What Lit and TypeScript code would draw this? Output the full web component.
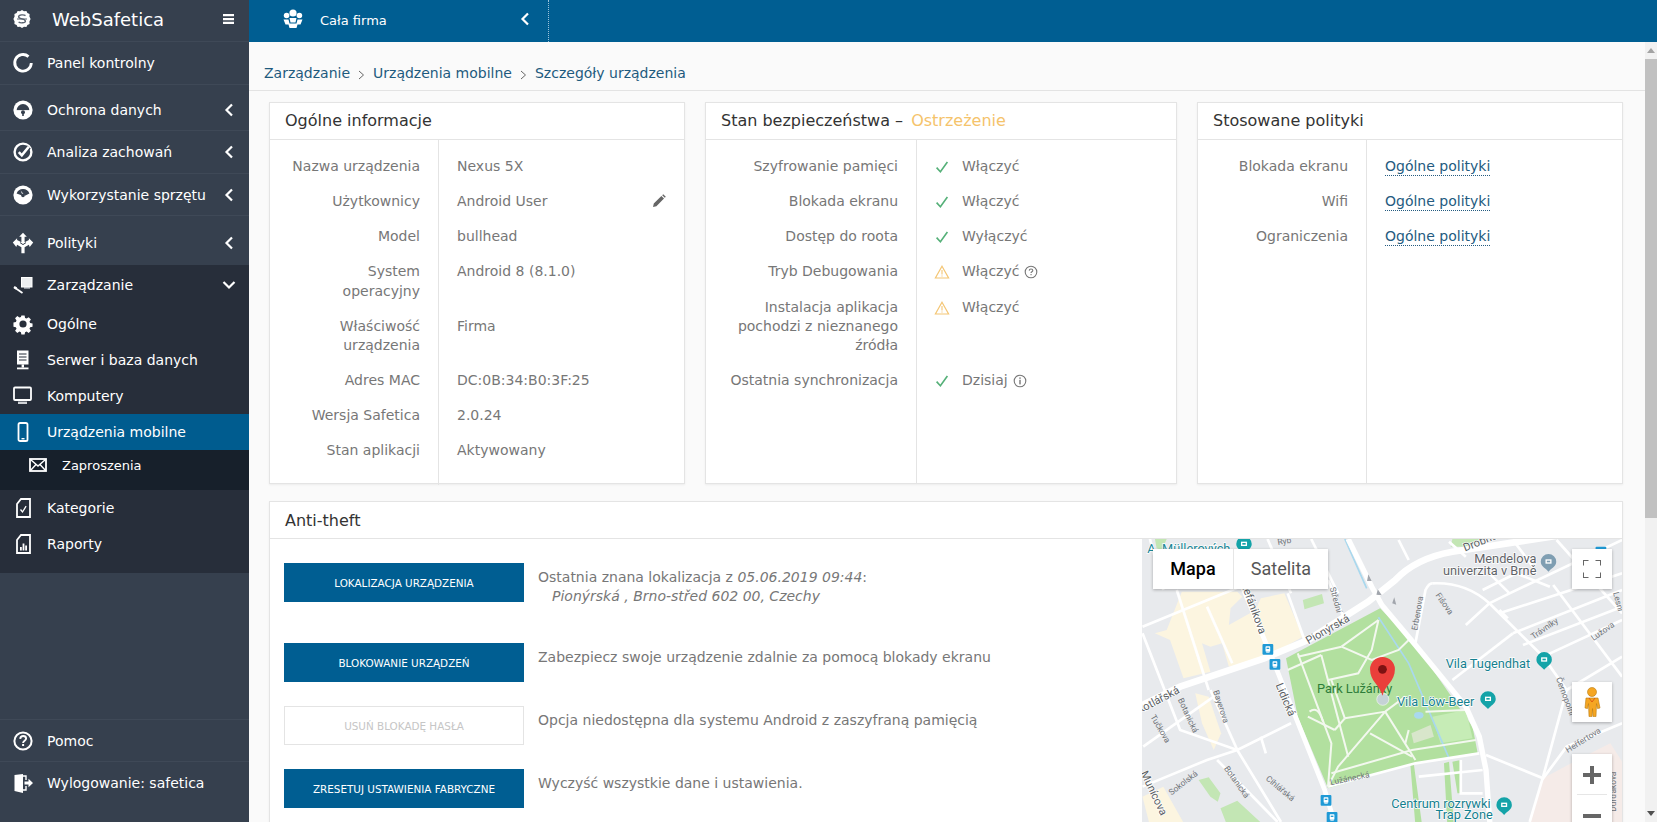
import { LitElement, html, css, svg } from "lit";
import { customElement } from "lit/decorators.js";

const ic = (body: unknown, size = 22) => html`<svg class="ic" width=${size} height=${size} viewBox="0 0 22 22">${body}</svg>`;
const D = "#36404e";
const D2 = "#272e3a";

const icons: Record<string, unknown> = {
  panel: svg`<path d="M16.5 4.6A8.3 8.3 0 1 0 19.3 11" fill="none" stroke="#fff" stroke-width="2.8"/>`,
  shield: svg`<circle cx="11" cy="11" r="9.6" fill="#fff"/><path d="M4.6 11.5a6.4 6.4 0 0 1 12.8 0z" fill="${D}"/><path d="M2 12.6h18v-1.4H2z" fill="#fff"/><circle cx="11" cy="13.2" r="2" fill="${D}"/><rect x="10.2" y="14" width="1.6" height="3" fill="${D}"/>`,
  check: svg`<circle cx="11" cy="11" r="8.4" fill="none" stroke="#fff" stroke-width="2.4"/><path d="M6.8 11.2l3 3.2 7-8.6" fill="none" stroke="${D}" stroke-width="5"/><path d="M6.8 11.2l3 3.2 7-8.6" fill="none" stroke="#fff" stroke-width="2.6"/>`,
  gauge: svg`<circle cx="11" cy="11" r="9.6" fill="#fff"/><path d="M4.6 9.6A6.8 6.8 0 0 1 17.4 9.6L13 11.8 8.6 6.6l2.2 5.2z" fill="${D}"/><circle cx="11" cy="11.4" r="1.8" fill="${D}"/>`,
  policy: svg`<path d="M11 .8l3.8 4h-2.2v5.400l4.300-2.300V6.200l4.300 4.300-3.500 4.500-.8-2.200-4.300 2.500v6H9.400v-6L5.100 12.800l-.8 2.200-3.500-4.500 4.300-4.300v1.700l4.300 2.300V4.800H7.200z" fill="#fff"/><path d="M8 10.600l3 2 3-2" stroke="${D}" stroke-width="1" fill="none"/>`,
  manage: svg`<rect x="9.5" y="3.5" width="10.500" height="9.500" fill="#eceef0" stroke="#fff" stroke-width="1"/><rect x="12" y="13" width="6" height="1.600" fill="#c8ccd2"/><path d="M2.500 13.500l8 5.500" stroke="#fff" stroke-width="1.800"/><path d="M2 13l2.500 1.500" stroke="#fff" stroke-width="2.400"/>`,
  gear: svg`<path d="M9.200 1.600h3.600l.5 2.700 1.700.7 2.300-1.600 2.500 2.500-1.600 2.300.7 1.700 2.700.5v3.600l-2.700.5-.7 1.700 1.600 2.300-2.500 2.500-2.300-1.600-1.700.7-.5 2.700H9.200l-.5-2.700-1.700-.7-2.300 1.600-2.500-2.500 1.600-2.300-.7-1.700-2.700-.5V9.200l2.700-.5.7-1.700-1.600-2.300 2.500-2.500L7 3.800l1.700-.7z" transform="translate(1.100 1.100) scale(.9)" fill="#fff"/><circle cx="11" cy="11" r="3.600" fill="${D2}"/>`,
  server: svg`<path d="M5 1.500h11.500v14H5z" fill="#fff"/><path d="M7 5h7.500M7 8h7.500M7 11h7.500" stroke="${D2}" stroke-width="1.200"/><rect x="9.600" y="15.500" width="2.400" height="3" fill="#fff"/><rect x="5" y="18.500" width="11.500" height="1.800" fill="#fff"/>`,
  monitor: svg`<rect x="2" y="2.500" width="17" height="12.500" rx="1" fill="none" stroke="#fff" stroke-width="1.800"/><rect x="6" y="16.600" width="9" height="2.400" fill="#cfd2d6"/>`,
  phone: svg`<rect x="6.500" y="2" width="9" height="18" rx="1.600" fill="none" stroke="#fff" stroke-width="1.800"/><rect x="9.500" y="17" width="3" height="1.400" fill="#fff"/>`,
  mail: svg`<rect x="3" y="5" width="16" height="12" fill="none" stroke="#fff" stroke-width="1.800"/><path d="M3.500 5.500l7.500 6.500 7.500-6.500M3.500 16.500l5.500-6M18.500 16.500l-5.500-6" fill="none" stroke="#fff" stroke-width="1.400"/>`,
  doccheck: svg`<path d="M9 2h9v18H5V7z" fill="none" stroke="#fff" stroke-width="1.800"/><path d="M8.500 12.500l2 2.500 3.600-5.800" fill="none" stroke="#fff" stroke-width="1.300"/>`,
  docchart: svg`<path d="M9 2h9v18H5V7z" fill="none" stroke="#fff" stroke-width="1.800"/><path d="M8 17.500V14h1.800v3.500zM10.600 17.500v-7h1.800v7zM13.200 17.500v-5H15v5z" fill="#fff"/>`,
  help: svg`<circle cx="11" cy="11" r="8.600" fill="none" stroke="#fff" stroke-width="2"/><path d="M8.200 8.800c.2-1.900 1.400-2.800 3-2.800 1.700 0 2.900 1 2.900 2.500 0 2.200-3 2.200-3 4.400" fill="none" stroke="#fff" stroke-width="1.900"/><rect x="10.100" y="14" width="2" height="2" fill="#fff"/>`,
  logout: svg`<path d="M2.500 3l8.500-1v19l-8.500-2z" fill="#fff"/><path d="M11 4h3v4M14 14v4h-3" fill="none" stroke="#fff" stroke-width="1.400"/><path d="M12.500 9.500h4V6.800l4.500 4.200-4.500 4.200v-2.700h-4z" fill="#fff"/>`,
};

const chevL = html`<svg class="chev" width="10" height="14" viewBox="0 0 10 14"><path d="M8 1.500L2.500 7 8 12.500" fill="none" stroke="#fff" stroke-width="2.200"/></svg>`;
const chevD = html`<svg class="chev" width="14" height="10" viewBox="0 0 14 10"><path d="M1.500 2L7 7.500 12.500 2" fill="none" stroke="#fff" stroke-width="2.200"/></svg>`;
const sep = html`<svg class="sep" width="7" height="10" viewBox="0 0 7 10"><path d="M1 1l4.500 4L1 9" fill="none" stroke="#666" stroke-width="1"/></svg>`;
const ok = html`<svg class="st" width="18" height="18" viewBox="0 0 18 18"><path d="M3.600 9.600l3.800 4.200L14.400 4" fill="none" stroke="#55b078" stroke-width="1.600"/></svg>`;
const warn = html`<svg class="st" width="18" height="18" viewBox="0 0 18 18"><path d="M9 3.200L15.600 15H2.400z" fill="none" stroke="#f4c675" stroke-width="1.200"/><path d="M9 7v4.400M9 12.400v1.200" stroke="#f4c675" stroke-width="1.100"/></svg>`;
const qmark = html`<svg class="tip" width="14" height="14" viewBox="0 0 14 14"><circle cx="7" cy="7" r="5.800" fill="none" stroke="#777" stroke-width="1.100"/><path d="M5.200 5.600c.1-1.100.9-1.600 1.800-1.600 1 0 1.800.6 1.800 1.500 0 1.300-1.800 1.300-1.800 2.600" fill="none" stroke="#777" stroke-width="1.100"/><rect x="6.500" y="9" width="1.100" height="1.200" fill="#777"/></svg>`;
const imark = html`<svg class="tip" width="14" height="14" viewBox="0 0 14 14"><circle cx="7" cy="7" r="5.800" fill="none" stroke="#777" stroke-width="1.100"/><rect x="6.300" y="3.400" width="1.400" height="1.400" fill="#777"/><rect x="6.300" y="5.800" width="1.400" height="4.600" fill="#777"/></svg>`;
const pencil = html`<svg class="pen" width="16" height="16" viewBox="0 0 16 16"><path d="M2 14l.8-3.400 7.600-7.600 2.600 2.600-7.600 7.600zM11.200 2.200l1-1 2.600 2.600-1 1z" fill="#666"/></svg>`;

const info: [string, string][] = [
  ["Nazwa urządzenia", "Nexus 5X"], ["Użytkownicy", "Android User"], ["Model", "bullhead"],
  ["System operacyjny", "Android 8 (8.1.0)"], ["Właściwość urządzenia", "Firma"], ["Adres MAC", "DC:0B:34:B0:3F:25"],
  ["Wersja Safetica", "2.0.24"], ["Stan aplikacji", "Aktywowany"],
];
const security: [string, unknown, string, unknown?][] = [
  ["Szyfrowanie pamięci", ok, "Włączyć"], ["Blokada ekranu", ok, "Włączyć"], ["Dostęp do roota", ok, "Wyłączyć"],
  ["Tryb Debugowania", warn, "Włączyć", qmark], ["Instalacja aplikacja pochodzi z nieznanego źródła", warn, "Włączyć"],
  ["Ostatnia synchronizacja", ok, "Dzisiaj", imark],
];
const policies = ["Blokada ekranu", "Wifi", "Ograniczenia"];

const thin = [
  "M38 290L400 140", "M140 180L235 480", "M230 230L305 400", "M470 190L520 330", "M590 150L640 270",
  "M38 310L150 600L320 660L450 876", "M240 480L320 660", "M320 660L480 580", "M40 650L250 500", "M38 770L230 690L320 660",
  "M260 690L440 876", "M390 620L405 670", "M60 27L100 180", "M410 27L480 190", "M540 27L620 190",
  "M900 160Q1000 155 1070 220L1230 380L1300 480L1230 740", "M1060 675L1230 745L1300 650L1465 580",
  "M1000 285L1070 220L1130 190L1465 30", "M1100 250L1465 130", "M1140 310L1465 180", "M1170 345L1465 230",
  "M960 450L1140 310", "M1260 165L1465 440", "M1070 130L1130 190", "M1050 180L1150 130L1250 170",
  "M800 30L830 90", "M950 35L1000 80", "M1140 30L1200 110", "M1270 30L1465 250", "M850 340L880 180Q890 160 900 160",
  "M590 770L850 700L1040 670", "M860 740L1050 720", "M985 690L985 790L1050 790", "M1190 876L1230 740", "M1300 480L1465 380",
  "M1100 240L1125 265", "M1230 380L1465 270",
];
const parkPaths = [
  "M500 370L600 640L590 770", "M570 375L650 680", "M630 350L740 270", "M740 270L720 360L680 430L590 450",
  "M630 350L720 390L800 360L830 330", "M500 380L630 350", "M530 560L610 600", "M640 565L760 545L820 500", "M760 545L620 710L590 770",
  "M760 545L850 690", "M715 610L840 680", "M600 730L840 660L1030 630", "M830 600L820 640", "M880 545L1000 540",
  "M535 545Q560 525 575 575", "M470 420L570 375", "M600 450L640 565", "M610 600L640 565",
];
const roadLabels: [string, number, number, number][] = [
  ["Střední", 612, 210, 75], ["Erbenova", 858, 250, -80], ["Fišova", 935, 222, 55], ["Trávníky", 1235, 297, -35], ["Lužova", 1408, 305, -35],
  ["Černopolní", 1295, 500, 70], ["Heřfertova", 1350, 632, -32], ["Botanická", 172, 557, 65], ["Tučkova", 90, 597, 60], ["Bayerova", 270, 530, 72],
  ["Botanická", 317, 757, 55], ["Cihlářská", 447, 777, 40], ["Lužánecká", 655, 747, -12], ["Durďákova", 1440, 785, -90], ["Lesní", 1452, 215, 75],
  ["Ryb", 460, 35, -10], ["Sokolská", 160, 760, -38],
];
const bigLabels: [string, number, number, number][] = [
  ["Pionýrská", 590, 300, -30], ["Lidická", 462, 510, 67], ["Štefánikova", 365, 230, 70], ["Kotlářská", 85, 512, -28], ["Munícova", 70, 790, 65], ["Drobného", 1060, 30, -22],
];
const tram = (x: number, y: number) => svg`<rect x=${x - 16} y=${y - 16} width="32" height="32" rx="3" fill="#1f9ad6"/><rect x=${x - 7} y=${y - 9} width="14" height="16" rx="2" fill="#fff"/><rect x=${x - 4} y=${y - 5} width="8" height="4" fill="#1f9ad6"/><rect x=${x - 5} y=${y + 8} width="10" height="2" fill="#fff"/>`;
const poi = (x: number, y: number, c = "#14a3a8") => svg`<path d="M${x} ${y + 27}C${x - 6} ${y + 18} ${x - 23} ${y + 12} ${x - 23} ${y - 3}A23 23 0 0 1 ${x + 23} ${y - 3}C${x + 23} ${y + 12} ${x + 6} ${y + 18} ${x} ${y + 27}z" fill=${c}/><rect x=${x - 9} y=${y - 10} width="18" height="13" fill="#fff"/><rect x=${x - 5} y=${y - 6} width="10" height="5" fill=${c}/>`;

const mapSvg = svg`
  <g transform="scale(.3361 .3333) translate(-38 -27)">
    <rect x="38" y="27" width="1430" height="860" fill="#e8eaed"/>
    <path d="M155 185L320 185 335 200 300 235 295 285 375 240 390 205 460 190 515 320 400 385 295 410 275 340 240 350 215 340 240 425 160 445 120 330 75 310 110 300z" fill="#fcf5e0"/>
    <path d="M195 490L235 500 272 610 250 660 215 580z" fill="#fcf5e0"/>
    <path d="M38 800L100 770 165 887H60z" fill="#fcf5e0"/>
    <path d="M1230 745L1350 680 1430 640 1468 700V887H1190z" fill="#f5ebe8"/>
    <path d="M515 210L572 192 578 220 520 238zM75 27H110L96 60 80 55zM960 27H1050L1010 50 955 50zM205 750L235 742 270 790 262 815 240 800zM270 835L320 812 400 887H290z" fill="#c3e6b4"/>
    <path d="M745 235L465 385 500 560 590 775 850 700 1035 668 1020 590 850 345z" fill="#b2e09f"/>
    <path d="M900 560L1000 540 1020 625 925 640z" fill="#c6ecb6"/>
    <path d="M838 610L895 585 905 620 845 640z" fill="#d8e6cb"/>
    <path d="M845 700L870 887H850L835 705zM950 695L965 887H945L935 700zM960 695L985 690 985 790 975 790z" fill="#b2e09f"/>
    <ellipse cx="860" cy="556" rx="14" ry="10" fill="#a9d8ee"/>
    <path d="M640 27L705 175M740 262L830 400 950 685" fill="none" stroke="#a9d8ee" stroke-width="5"/>
    <g fill="none" stroke="#fff" stroke-width="8">${thin.map((d) => svg`<path d=${d}/>`)}</g>
    <g fill="none" stroke="#f3f8ef" stroke-width="6">${parkPaths.map((d) => svg`<path d=${d}/>`)}</g>
    <g fill="none" stroke="#fff">
      <path d="M38 525L150 470 400 385 530 330 710 215 790 150Q850 85 960 65L1320 10" stroke-width="20"/>
      <path d="M650 27L720 170 750 225 850 345 1000 530 1040 620 1060 720 1072 887" stroke-width="16"/>
      <path d="M335 170L430 400 580 780 612 887" stroke-width="14"/>
    </g>
    <g fill="#a2a6ad"><path d="M710 133l10 20-14 0zM738 178l12 18-16-2zM787 202l6 22-12-4z"/></g>
    <g font-family="Roboto,sans-serif" font-size="25" fill="#6f7378" text-anchor="middle">
      ${roadLabels.map(([t, x, y, r]) => svg`<text transform="translate(${x} ${y}) rotate(${r})" dominant-baseline="middle">${t}</text>`)}
    </g>
    <g font-family="Roboto,sans-serif" font-size="33" fill="#5a5e63" text-anchor="middle" stroke="#fff" stroke-width="4" paint-order="stroke">
      ${bigLabels.map(([t, x, y, r]) => svg`<text transform="translate(${x} ${y}) rotate(${r})" dominant-baseline="middle">${t}</text>`)}
    </g>
    ${[[411, 358], [432, 403], [584, 811], [602, 862], [1402, 66]].map(([x, y]) => tram(x, y))}
    ${[[340, 45], [1233, 392], [1066, 510], [1114, 828]].map(([x, y]) => poi(x, y))}
    ${poi(1246, 98, "#7f9eb2")}
    <g font-family="Roboto,sans-serif" font-size="38" paint-order="stroke" stroke="#fff" stroke-width="4">
      <text x="52" y="70" fill="#1a8797">A. Müllerových</text>
      <text x="1210" y="98" text-anchor="end" fill="#5f6368">Mendelova</text>
      <text x="1210" y="136" text-anchor="end" fill="#5f6368">univerzita v Brně</text>
      <text x="940" y="413" fill="#14808f">Vila Tugendhat</text>
      <text x="795" y="529" fill="#14808f">Vila Löw-Beer</text>
      <text x="557" y="490" fill="#2e7d3a" stroke="#b2e09f">Park Lužánky</text>
      <text x="778" y="833" fill="#14808f">Centrum rozrywki</text>
      <text x="1080" y="868" text-anchor="end" fill="#14808f">Trap Zone</text>
    </g>
    <circle cx="753" cy="508" r="18" fill="#c9d0e0" stroke="#fff" stroke-width="2" opacity=".85"/>
    <path d="M752 497C744 465 715 455 715 418A37 37 0 0 1 789 418C789 455 760 465 752 497z" fill="#ea3f3a"/>
    <ellipse cx="752" cy="418" rx="13" ry="13" fill="#7d1212"/>
  </g>`;

@customElement("app-root")
export class AppRoot extends LitElement {
  static styles = css`
    :host { display: flex; width: 1657px; height: 822px; overflow: hidden; font-family: "DejaVu Sans", Verdana, sans-serif; font-size: 14px; color: #777; background: #fafafa; }
    svg { display: block; flex: none; }
    .side { width: 249px; flex: none; background: #36404e; display: flex; flex-direction: column; color: #fff; font-size: 14px; }
    .brand { height: 42px; flex: none; display: flex; align-items: center; padding: 0 14px 3px 12px; box-sizing: border-box; border-bottom: 1px solid #3f4957; }
    .brand .name { font-size: 18px; margin-left: 20px; flex: 1; }
    .item { display: flex; align-items: center; padding: 0 15px 0 12px; box-sizing: border-box; border-bottom: 1px solid #3f4957; }
    .item span { margin-left: 13px; flex: 1; white-space: nowrap; }
    .h43 { height: 43px; } .h42 { height: 42px; } .h41 { height: 41px; } .h44 { height: 44px; }
    .gap { height: 5px; flex: none; } .gap5 { height: 5px; flex: none; }
    .plain { border-bottom: 0; }
    .dark { background: #272e3a; height: 308px; flex: none; }
    .dark .item { height: 36px; border: 0; }
    .dark .head { height: 41px; padding: 0 13px 2px 12px; }
    .dark .active { background: #005c8f; height: 36px; }
    .subs { background: #17202b; height: 40px; display: flex; align-items: flex-start; padding: 3px 0 0 27px; box-sizing: border-box; }
    .subs .row { display: flex; align-items: center; height: 24px; font-size: 13px; }
    .subs .row span { margin-left: 13px; }
    .fill { flex: 1; }
    .foot { border-top: 1px solid #3f4957; margin-bottom: 19px; }
    .foot .item:last-child { border: 0; }
    .main { flex: 1; display: flex; flex-direction: column; min-width: 0; }
    .top { height: 42px; flex: none; background: #005e92; display: flex; align-items: center; color: #fff; }
    .top .org { width: 300px; height: 42px; display: flex; align-items: center; padding: 0 18px 0 33px; box-sizing: border-box; border-right: 1px dotted #9cc3da; }
    .top .org svg:first-child { margin-top: -4px; }
    .top .org .chev { margin-top: -5px; }
    .top .org span { flex: 1; margin: -1px 0 0 16px; font-size: 13px; }
    .body { flex: 1; display: flex; min-height: 0; }
    .content { flex: 1; overflow: hidden; min-width: 0; }
    .crumbs { height: 49px; box-sizing: border-box; border-bottom: 1px solid #e3e3e3; padding: 22px 0 0 15px; line-height: 19px; color: #1e5a7e; display: flex; align-items: flex-start; font-size: 14px; }
    .crumbs .sep { margin: 6px 8px 0; }
    .wrap { padding: 11px 22px 0 20px; display: flex; flex-direction: column; gap: 17px; }
    .cards { display: flex; gap: 20px; height: 382px; }
    .card { background: #fff; border: 1px solid #e4e4e4; box-shadow: 0 1px 2px rgba(0, 0, 0, .06); display: flex; flex-direction: column; box-sizing: border-box; }
    .c1 { width: 416px; --lw: 168px; } .c2 { width: 472px; --lw: 210px; } .c3 { width: 426px; --lw: 168px; }
    .hd { height: 37px; flex: none; box-sizing: border-box; border-bottom: 1px solid #e4e4e4; padding: 0 15px; line-height: 36px; font-size: 16px; color: #333; white-space: nowrap; }
    .hd b { font-weight: normal; color: #f5c36b; margin-left: 3px; }
    .tbl { flex: 1; display: flex; flex-direction: column; }
    .r { display: flex; line-height: 19.15px; }
    .r:first-child .l, .r:first-child .v { padding-top: 17px; }
    .l { width: var(--lw); flex: none; box-sizing: border-box; text-align: right; padding: 8px 18px 8px 20px; }
    .v { flex: 1; border-left: 1px solid #e4e4e4; padding: 8px 17px 8px 18px; display: flex; align-items: flex-start; min-width: 0; }
    .v .grow { flex: 1; }
    .c2 .v { padding-left: 16px; }
    .st { margin: 1px 11px 0 0; }
    .tip { margin: 3px 0 0 5px; }
    .pen { margin-top: 1px; }
    .r.end { flex: 1; }
    a { color: #245b80; border-bottom: 1px dotted #245b80; line-height: 18px; }
    .anti { height: 400px; }
    .anti .hd { line-height: 38px; height: 37px; }
    .anti .bd { flex: 1; display: flex; }
    .acts { width: 872px; flex: none; box-sizing: border-box; padding: 24px 14px 0 14px; }
    .act { display: flex; margin-bottom: 24px; }
    .act.first { margin-bottom: 37px; }
    .btn { width: 240px; height: 39px; flex: none; background: #005e92; color: #fff; display: flex; align-items: center; justify-content: center; font-size: 10.4px; box-sizing: border-box; white-space: nowrap; }
    .btn.off { background: #fff; border: 1px solid #e4e4e4; color: #c6c6c6; }
    .desc { margin-left: 14px; padding-top: 5px; line-height: 19px; white-space: nowrap; }
    .desc div { padding-left: 14px; font-style: italic; }
    .map { flex: 1; position: relative; overflow: hidden; background: #e8eaed; }
    .map > svg { position: absolute; inset: 0; }
    .ctl { position: absolute; background: #fff; box-shadow: 0 1px 3px rgba(0, 0, 0, .28); display: flex; align-items: center; justify-content: center; }
    .types { left: 11px; top: 10px; height: 40px; width: 175px; font-family: Roboto, sans-serif; font-size: 18px; justify-content: flex-start; }
    .types div { text-align: center; line-height: 40px; }
    .types .on { width: 80px; color: #000; font-weight: 500; border-right: 1px solid #e6e6e6; }
    .types .off { flex: 1; color: #565656; }
    .fs { left: 430px; top: 10px; width: 40px; height: 40px; }
    .peg { left: 430px; top: 143px; width: 40px; height: 40px; }
    .zoom { left: 430px; top: 215px; width: 40px; height: 81px; flex-direction: column; justify-content: flex-start; }
    .zoom .plus { margin-top: 12px; }
    .zoom .line { margin-top: 10px; }
    .zoom .minus { margin-top: 19px; }
    .scroll { width: 12px; flex: none; background: #f1f1f1; display: flex; flex-direction: column; align-items: stretch; }
    .sb-btn { height: 17px; flex: none; display: flex; align-items: center; justify-content: center; }
    .thumb { height: 459px; flex: none; background: #c1c1c1; }
    .track { flex: 1; }
  `;

  private nav(icon: string, label: string, cls: string, chev: unknown = chevL) {
    return html`<div class="item ${cls}">${ic(icons[icon])}<span>${label}</span>${chev}</div>`;
  }

  render() {
    return html`
      <aside class="side">
        <div class="brand">
          <svg width="20" height="20" viewBox="0 0 20 20"><path d="M10 1l2 1.200 2.400-.3 1 2.100 2.200 1-.2 2.400L18.600 10l-1.200 2.600.2 2.400-2.200 1-1 2.100-2.400-.3L10 19l-2-1.200-2.400.3-1-2.100-2.200-1 .2-2.400L1.400 10l1.200-2.600-.2-2.400 2.200-1 1-2.100 2.400.3z" fill="#fff"/><path d="M13.500 6.600C12 5.400 6.800 5.600 6.600 7.800c-.2 2.400 7 1.800 6.800 4.400-.2 2-5.400 2-6.800.8" fill="none" stroke="#59626f" stroke-width="1.400"/><path d="M5 10h10" stroke="#59626f" stroke-width="1"/></svg>
          <div class="name">WebSafetica</div>
          <svg width="12" height="12" viewBox="0 0 12 12"><path d="M0 1h11v2.300H0zM0 4.900h11v2.300H0zM0 8.800h11v2.300H0z" fill="#fff"/></svg>
        </div>
        ${this.nav("panel", "Panel kontrolny", "h43", "")}
        <div class="gap"></div>
        ${this.nav("shield", "Ochrona danych", "h41")}
        ${this.nav("check", "Analiza zachowań", "h43")}
        ${this.nav("gauge", "Wykorzystanie sprzętu", "h42")}
        <div class="gap5"></div>
        ${this.nav("policy", "Polityki", "h44 plain")}
        <div class="dark">
          ${this.nav("manage", "Zarządzanie", "head", chevD)}
          ${this.nav("gear", "Ogólne", "", "")}
          ${this.nav("server", "Serwer i baza danych", "", "")}
          ${this.nav("monitor", "Komputery", "", "")}
          ${this.nav("phone", "Urządzenia mobilne", "active", "")}
          <div class="subs"><div class="row">${ic(icons.mail)}<span>Zaproszenia</span></div></div>
          ${this.nav("doccheck", "Kategorie", "", "")}
          ${this.nav("docchart", "Raporty", "", "")}
        </div>
        <div class="fill"></div>
        <div class="foot">
          ${this.nav("help", "Pomoc", "h42", "")}
          ${this.nav("logout", "Wylogowanie: safetica", "h41", "")}
        </div>
      </aside>
      <div class="main">
        <div class="top">
          <div class="org">
            <svg width="22" height="22" viewBox="0 0 22 22"><circle cx="11" cy="5" r="3.600" fill="#fff"/><circle cx="4.600" cy="7.500" r="2.800" fill="#fff"/><circle cx="17.400" cy="7.500" r="2.800" fill="#fff"/><path d="M1.500 11.500h5l1 4h7l1-4h5l-2 5h-3l-1 3.500H7.500l-1-3.500h-3z" fill="#fff"/><path d="M7.500 10h7l-1 4.500h-5z" fill="#fff"/></svg>
            <span>Cała firma</span>
            ${chevL}
          </div>
        </div>
        <div class="body">
          <div class="content">
            <div class="crumbs"><span>Zarządzanie</span>${sep}<span>Urządzenia mobilne</span>${sep}<span>Szczegóły urządzenia</span></div>
            <div class="wrap">
              <div class="cards">
                <section class="card c1">
                  <div class="hd">Ogólne informacje</div>
                  <div class="tbl">
                    ${info.map(([k, v], i) => html`<div class="r"><div class="l">${k}</div><div class="v"><span class="grow">${v}</span>${i === 1 ? pencil : ""}</div></div>`)}
                    <div class="r end"><div class="l"></div><div class="v"></div></div>
                  </div>
                </section>
                <section class="card c2">
                  <div class="hd">Stan bezpieczeństwa – <b>Ostrzeżenie</b></div>
                  <div class="tbl">
                    ${security.map(([k, s, v, t]) => html`<div class="r"><div class="l">${k}</div><div class="v">${s}<span>${v}</span>${t ?? ""}</div></div>`)}
                    <div class="r end"><div class="l"></div><div class="v"></div></div>
                  </div>
                </section>
                <section class="card c3">
                  <div class="hd">Stosowane polityki</div>
                  <div class="tbl">
                    ${policies.map((k) => html`<div class="r"><div class="l">${k}</div><div class="v"><a>Ogólne polityki</a></div></div>`)}
                    <div class="r end"><div class="l"></div><div class="v"></div></div>
                  </div>
                </section>
              </div>
              <section class="card anti">
                <div class="hd">Anti-theft</div>
                <div class="bd">
                  <div class="acts">
                    <div class="act first"><div class="btn">LOKALIZACJA URZĄDZENIA</div><div class="desc">Ostatnia znana lokalizacja z <em>05.06.2019 09:44</em>:<div>Pionýrská , Brno-střed 602 00, Czechy</div></div></div>
                    <div class="act"><div class="btn">BLOKOWANIE URZĄDZEŃ</div><div class="desc">Zabezpiecz swoje urządzenie zdalnie za pomocą blokady ekranu</div></div>
                    <div class="act"><div class="btn off">USUŃ BLOKADĘ HASŁA</div><div class="desc">Opcja niedostępna dla systemu Android z zaszyfraną pamięcią</div></div>
                    <div class="act"><div class="btn">ZRESETUJ USTAWIENIA FABRYCZNE</div><div class="desc">Wyczyść wszystkie dane i ustawienia.</div></div>
                  </div>
                  <div class="map">
                    <svg width="480" height="283" viewBox="0 0 479 283">${mapSvg}</svg>
                    <div class="ctl types"><div class="on">Mapa</div><div class="off">Satelita</div></div>
                    <div class="ctl fs"><svg width="18" height="18" viewBox="0 0 18 18"><path d="M0 5.500V0h5.500M12.500 0H18v5.500M18 12.500V18h-5.500M5.500 18H0v-5.500" fill="none" stroke="#666" stroke-width="2"/></svg></div>
                    <div class="ctl peg"><svg width="18" height="30" viewBox="0 0 18 30"><circle cx="9" cy="5" r="4.500" fill="#f5a623" stroke="#b97a10" stroke-width=".6"/><path d="M3 11h12l2 10-2.500.6-1-5-.5 13h-3l-.5-8-.5 8H6l-.5-13-1 5L2 21z" fill="#f5a623" stroke="#b97a10" stroke-width=".6"/><path d="M6 11l3 4 3-4" fill="none" stroke="#d9480f" stroke-width=".8"/></svg></div>
                    <div class="ctl zoom">
                      <svg class="plus" width="18" height="18" viewBox="0 0 18 18"><path d="M7 0h4v7h7v4h-7v7H7v-7H0V7h7z" fill="#666"/></svg>
                      <svg class="line" width="30" height="1" viewBox="0 0 30 1"><rect width="30" height="1" fill="#e6e6e6"/></svg>
                      <svg class="minus" width="18" height="4" viewBox="0 0 18 4"><rect width="18" height="4" fill="#666"/></svg>
                    </div>
                  </div>
                </div>
              </section>
            </div>
          </div>
          <div class="scroll">
            <div class="sb-btn"><svg width="8" height="5" viewBox="0 0 8 5"><path d="M4 0l4 5H0z" fill="#a3a3a3"/></svg></div>
            <div class="thumb"></div>
            <div class="track"></div>
            <div class="sb-btn"><svg width="8" height="5" viewBox="0 0 8 5"><path d="M0 0h8L4 5z" fill="#505050"/></svg></div>
          </div>
        </div>
      </div>
    `;
  }
}
